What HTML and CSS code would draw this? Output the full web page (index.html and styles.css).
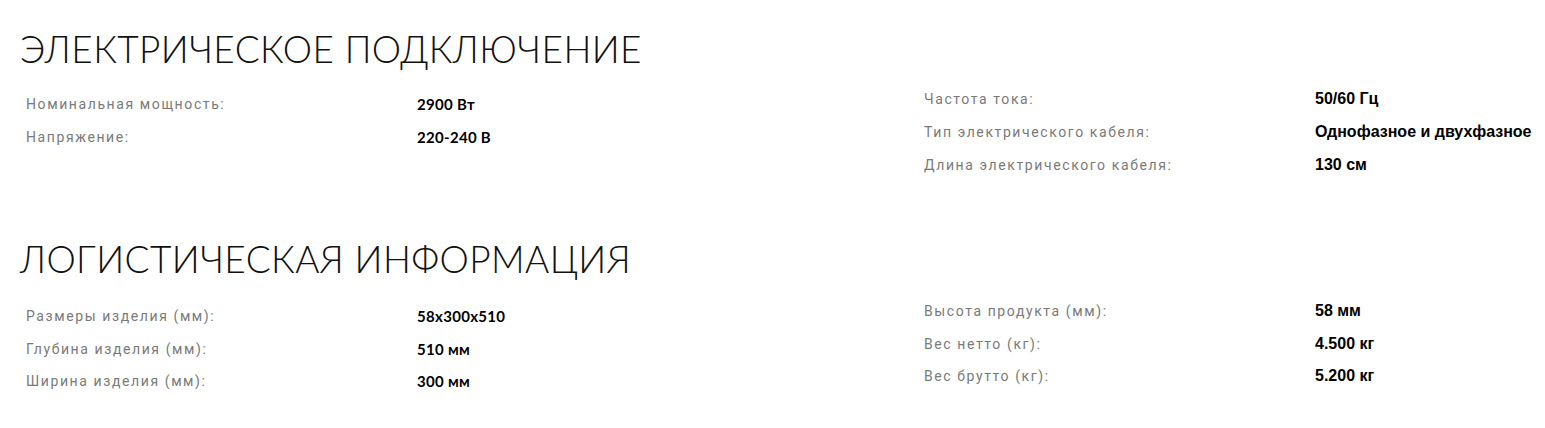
FILE: index.html
```html
<!DOCTYPE html>
<html lang="ru">
<head>
<meta charset="utf-8">
<link rel="stylesheet" href="styles.css">
</head>
<body>
<section class="spec">
  <h2 class="spec-title">ЭЛЕКТРИЧЕСКОЕ ПОДКЛЮЧЕНИЕ</h2>
  <div class="spec-cols">
    <div class="spec-col spec-col-left">
      <div class="spec-row"><span class="spec-label">Номинальная мощность:</span><span class="spec-value spec-value-alt">2900 Вт</span></div>
      <div class="spec-row"><span class="spec-label">Напряжение:</span><span class="spec-value spec-value-alt">220-240 В</span></div>
    </div>
    <div class="spec-col">
      <div class="spec-row"><span class="spec-label">Частота тока:</span><span class="spec-value">50/60 Гц</span></div>
      <div class="spec-row"><span class="spec-label">Тип электрического кабеля:</span><span class="spec-value">Однофазное и двухфазное</span></div>
      <div class="spec-row"><span class="spec-label">Длина электрического кабеля:</span><span class="spec-value">130 см</span></div>
    </div>
  </div>
</section>
<section class="spec spec-second">
  <h2 class="spec-title">ЛОГИСТИЧЕСКАЯ ИНФОРМАЦИЯ</h2>
  <div class="spec-cols">
    <div class="spec-col spec-col-left">
      <div class="spec-row"><span class="spec-label">Размеры изделия (мм):</span><span class="spec-value spec-value-alt">58x300x510</span></div>
      <div class="spec-row"><span class="spec-label">Глубина изделия (мм):</span><span class="spec-value spec-value-alt">510 мм</span></div>
      <div class="spec-row"><span class="spec-label">Ширина изделия (мм):</span><span class="spec-value spec-value-alt">300 мм</span></div>
    </div>
    <div class="spec-col">
      <div class="spec-row"><span class="spec-label">Высота продукта (мм):</span><span class="spec-value">58 мм</span></div>
      <div class="spec-row"><span class="spec-label">Вес нетто (кг):</span><span class="spec-value">4.500 кг</span></div>
      <div class="spec-row"><span class="spec-label">Вес брутто (кг):</span><span class="spec-value">5.200 кг</span></div>
    </div>
  </div>
</section>
</body>
</html>
```
FILE: styles.css
```css
html, body {
  margin: 0;
  padding: 0;
  background: #fff;
}
body {
  font-family: "Liberation Sans", Arial, sans-serif;
  color: #000;
}
.spec {
  padding: 29px 0 0 20px;
}
.spec-second {
  padding-top: 58px;
}
.spec-title {
  margin: 0;
  font-family: Lato, "Open Sans", sans-serif;
  font-weight: 300;
  font-size: 37px;
  line-height: 40px;
  letter-spacing: 0.4px;
  color: #111;
}
.spec-cols {
  display: grid;
  grid-template-columns: 898px 1fr;
  padding: 13px 0 0 6px;
}
.spec-second .spec-cols {
  padding-top: 16px;
}
.spec-col-left {
  padding-top: 5px;
}
.spec-row {
  display: flex;
  align-items: center;
  height: 33px;
  white-space: nowrap;
}
.spec-second .spec-row {
  height: 32.5px;
}
.spec-label {
  width: 391px;
  flex: none;
  font-family: Roboto, "Liberation Sans", sans-serif;
  font-weight: 400;
  font-size: 14px;
  letter-spacing: 1.6px;
  color: #7a7a7a;
}
.spec-value {
  font-family: "Liberation Sans", Arial, sans-serif;
  font-weight: 700;
  font-size: 16px;
  color: #000;
}
.spec-value-alt {
  font-family: Lato, "Open Sans", sans-serif;
  font-weight: 700;
  font-size: 15px;
  letter-spacing: 0.3px;
}
```
